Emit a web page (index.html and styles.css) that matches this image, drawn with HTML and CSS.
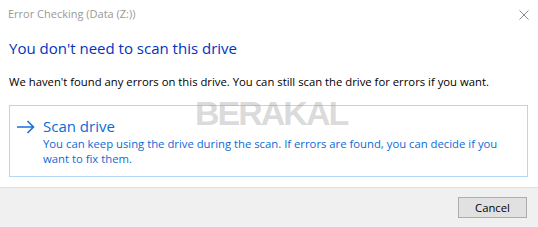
FILE: index.html
```html
<!DOCTYPE html>
<html>
<head>
<meta charset="utf-8">
<link rel="stylesheet" href="styles.css">
</head>
<body>
<div class="dialog">
  <div class="titlebar">
    <span class="title">Error Checking (Data (Z:))</span>
    <svg class="close" width="10" height="10" viewBox="0 0 10 10"><path d="M0.5 0.5 L9.5 9.5 M9.5 0.5 L0.5 9.5" stroke="#8a8a8a" stroke-width="1" fill="none"/></svg>
  </div>
  <div class="content">
    <h1 class="heading">You don't need to scan this drive</h1>
    <p class="body">We haven't found any errors on this drive. You can still scan the drive for errors if you want.</p>
    <div class="cmdlink">
      <svg class="arrow" width="18" height="14" viewBox="0 0 18 14"><path d="M0 7 H16.5 M10.5 1 L16.5 7 L10.5 13" stroke="#1a6fdc" stroke-width="1.6" fill="none"/></svg>
      <div class="cmdtext">
        <div class="cmdtitle">Scan drive</div>
        <div class="cmddesc">You can keep using the drive during the scan. If errors are found, you can decide if you want to fix them.</div>
      </div>
    </div>
  </div>
  <div class="footer">
    <button class="btn">Cancel</button>
  </div>
  <div class="watermark">BERAKAL</div>
</div>
</body>
</html>
```
FILE: styles.css
```css
* { box-sizing: border-box; }
html, body { margin: 0; padding: 0; background: #fff; }
body { width: 538px; height: 227px; overflow: hidden; font-family: "Open Sans", "Noto Sans", sans-serif; }
.dialog { position: relative; width: 538px; height: 227px; display: flex; flex-direction: column; }
.titlebar { height: 30px; display: flex; justify-content: space-between; align-items: flex-start; padding: 6px 9px 0 8px; }
.title { font-size: 11px; line-height: 16px; color: #999; }
.close { margin-top: 4px; }
.content { flex: 1; padding: 0 10px 0 9px; }
.heading { margin: 8px 0 0; font-size: 15px; font-weight: normal; line-height: 21px; color: #0033bc; }
.body { margin: 15px 0 0; font-size: 11.3px; line-height: 16px; color: #000; }
.cmdlink { margin-top: 15px; border: 1px solid #b3d8f5; height: 72px; display: flex; padding: 10px 0 0 7px; gap: 8px; }
.arrow { margin-top: 4px; flex: none; }
.cmdtext { max-width: 468px; }
.cmdtitle { font-size: 15px; line-height: 20px; color: #0a6bd6; }
.cmddesc { font-size: 11.3px; line-height: 15px; color: #0a6bd6; }
.footer { height: 40px; border-top: 1px solid #dfdfdf; background: #f0f0f0; display: flex; justify-content: flex-end; align-items: flex-start; padding: 9px 11px 0 0; }
.btn { width: 69px; height: 21px; border: 1px solid #adadad; background: #e1e1e1; font-family: "Open Sans", "Noto Sans", sans-serif; font-size: 11.3px; color: #000; padding: 0; }
.watermark { position: absolute; left: 195px; top: 96px; font-family: "Liberation Sans", Arial, sans-serif; font-weight: bold; font-size: 34px; line-height: 34px; letter-spacing: -2px; color: rgba(140,140,140,0.32); pointer-events: none; }
```
